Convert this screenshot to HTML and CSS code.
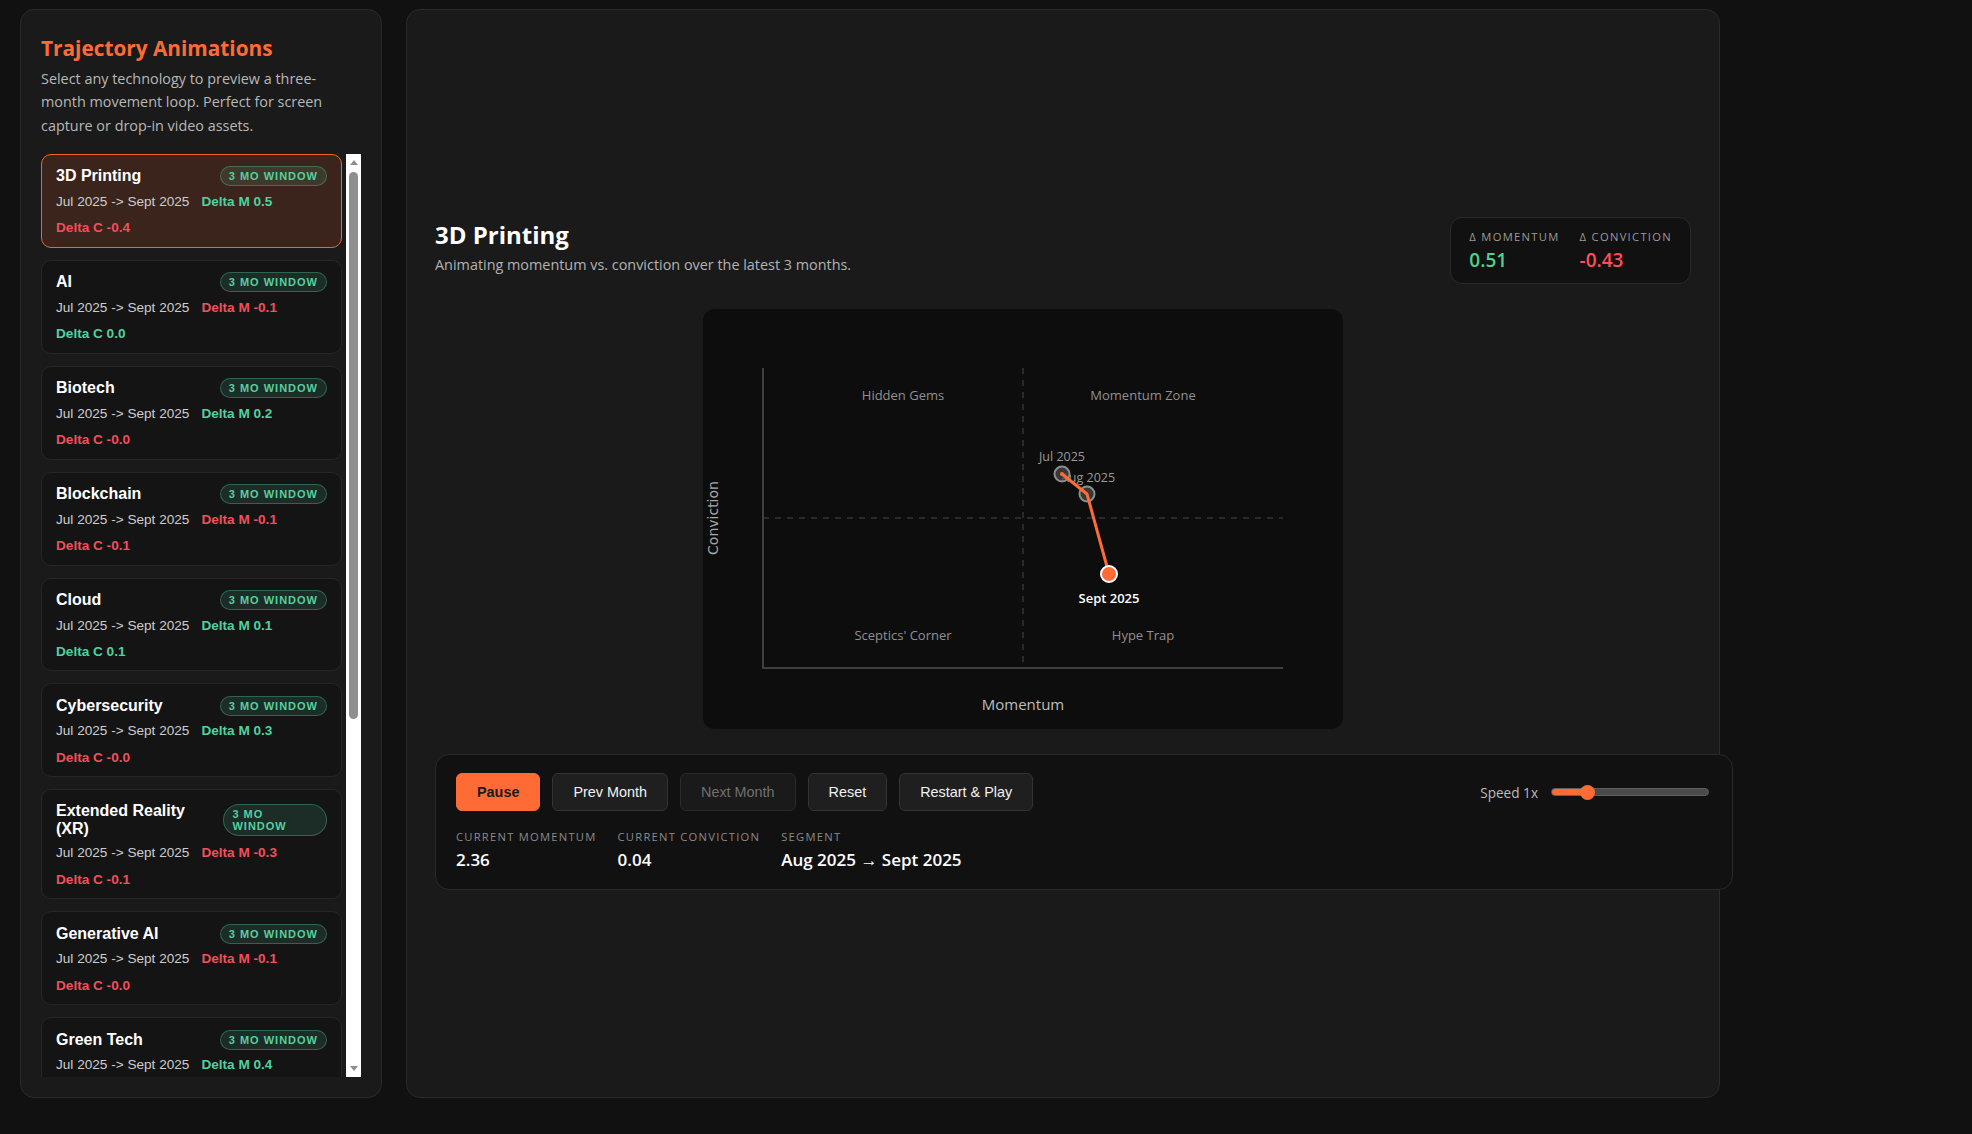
FILE: index.html
```html
<!DOCTYPE html>
<html lang="en">
<head>
<meta charset="utf-8">
<title>Trajectory Animations</title>
<link rel="stylesheet" href="styles.css">
</head>
<body>
<div class="app">
  <aside class="sidebar">
    <h1 class="side-title">Trajectory Animations</h1>
    <p class="side-desc">Select any technology to preview a three-month movement loop. Perfect for screen capture or drop-in video assets.</p>
    <div class="list-wrap">
      <div class="tech-list">
        <button class="tech-card is-active">
          <span class="card-head"><span class="card-name">3D Printing</span><span class="badge">3 MO WINDOW</span></span>
          <span class="card-meta"><span class="range">Jul 2025 -&gt; Sept 2025</span><span class="up">Delta M 0.5</span><span class="down">Delta C -0.4</span></span>
        </button>
        <button class="tech-card">
          <span class="card-head"><span class="card-name">AI</span><span class="badge">3 MO WINDOW</span></span>
          <span class="card-meta"><span class="range">Jul 2025 -&gt; Sept 2025</span><span class="down">Delta M -0.1</span><span class="up">Delta C 0.0</span></span>
        </button>
        <button class="tech-card">
          <span class="card-head"><span class="card-name">Biotech</span><span class="badge">3 MO WINDOW</span></span>
          <span class="card-meta"><span class="range">Jul 2025 -&gt; Sept 2025</span><span class="up">Delta M 0.2</span><span class="down">Delta C -0.0</span></span>
        </button>
        <button class="tech-card">
          <span class="card-head"><span class="card-name">Blockchain</span><span class="badge">3 MO WINDOW</span></span>
          <span class="card-meta"><span class="range">Jul 2025 -&gt; Sept 2025</span><span class="down">Delta M -0.1</span><span class="down">Delta C -0.1</span></span>
        </button>
        <button class="tech-card">
          <span class="card-head"><span class="card-name">Cloud</span><span class="badge">3 MO WINDOW</span></span>
          <span class="card-meta"><span class="range">Jul 2025 -&gt; Sept 2025</span><span class="up">Delta M 0.1</span><span class="up">Delta C 0.1</span></span>
        </button>
        <button class="tech-card">
          <span class="card-head"><span class="card-name">Cybersecurity</span><span class="badge">3 MO WINDOW</span></span>
          <span class="card-meta"><span class="range">Jul 2025 -&gt; Sept 2025</span><span class="up">Delta M 0.3</span><span class="down">Delta C -0.0</span></span>
        </button>
        <button class="tech-card">
          <span class="card-head"><span class="card-name">Extended Reality (XR)</span><span class="badge">3 MO WINDOW</span></span>
          <span class="card-meta"><span class="range">Jul 2025 -&gt; Sept 2025</span><span class="down">Delta M -0.3</span><span class="down">Delta C -0.1</span></span>
        </button>
        <button class="tech-card">
          <span class="card-head"><span class="card-name">Generative AI</span><span class="badge">3 MO WINDOW</span></span>
          <span class="card-meta"><span class="range">Jul 2025 -&gt; Sept 2025</span><span class="down">Delta M -0.1</span><span class="down">Delta C -0.0</span></span>
        </button>
        <button class="tech-card">
          <span class="card-head"><span class="card-name">Green Tech</span><span class="badge">3 MO WINDOW</span></span>
          <span class="card-meta"><span class="range">Jul 2025 -&gt; Sept 2025</span><span class="up">Delta M 0.4</span><span class="up">Delta C 0.2</span></span>
        </button>
        <button class="tech-card">
          <span class="card-head"><span class="card-name">IoT</span><span class="badge">3 MO WINDOW</span></span>
          <span class="card-meta"><span class="range">Jul 2025 -&gt; Sept 2025</span><span class="down">Delta M -0.2</span><span class="up">Delta C 0.0</span></span>
        </button>
        <button class="tech-card">
          <span class="card-head"><span class="card-name">Quantum Computing</span><span class="badge">3 MO WINDOW</span></span>
          <span class="card-meta"><span class="range">Jul 2025 -&gt; Sept 2025</span><span class="up">Delta M 0.6</span><span class="up">Delta C 0.1</span></span>
        </button>
        <button class="tech-card">
          <span class="card-head"><span class="card-name">Robotics</span><span class="badge">3 MO WINDOW</span></span>
          <span class="card-meta"><span class="range">Jul 2025 -&gt; Sept 2025</span><span class="up">Delta M 0.2</span><span class="down">Delta C -0.1</span></span>
        </button>
      </div>
      <div class="scrollbar" aria-hidden="true">
        <span class="sb-arrow sb-up"></span>
        <span class="sb-track"><span class="sb-thumb"></span></span>
        <span class="sb-arrow sb-down"></span>
      </div>
    </div>
  </aside>

  <main class="stage">
    <header class="stage-head">
      <div class="stage-title">
        <h2>3D Printing</h2>
        <p>Animating momentum vs. conviction over the latest 3 months.</p>
      </div>
      <div class="delta-box">
        <div class="delta-item"><span class="delta-label">Δ Momentum</span><span class="delta-value up">0.51</span></div>
        <div class="delta-item"><span class="delta-label">Δ Conviction</span><span class="delta-value down">-0.43</span></div>
      </div>
    </header>

    <div class="chart">
      <svg class="chart-svg" width="640" height="420" viewBox="0 0 640 420">
        <line x1="320" y1="59" x2="320" y2="359" class="mid-line"/>
        <line x1="60" y1="209" x2="580" y2="209" class="mid-line"/>
        <line x1="60" y1="59" x2="60" y2="360" class="axis-line"/>
        <line x1="59" y1="359" x2="580" y2="359" class="axis-line"/>
        <text x="200" y="86" class="quad">Hidden Gems</text>
        <text x="440" y="86" class="quad">Momentum Zone</text>
        <text x="200" y="326" class="quad">Sceptics' Corner</text>
        <text x="440" y="326" class="quad">Hype Trap</text>
        <text x="320" y="395" class="axis-x">Momentum</text>
        <text x="10" y="209" class="axis-y" transform="rotate(-90 10 209)">Conviction</text>
        <text x="359" y="147" class="pt-label">Jul 2025</text>
        <text x="385" y="168" class="pt-label">Aug 2025</text>
        <circle cx="359" cy="165" r="7.5" class="pt-past"/>
        <circle cx="384" cy="185" r="7.5" class="pt-past"/>
        <polyline points="359,165 384,185 406,265" class="trail"/>
        <circle cx="359" cy="165" r="2" class="trail-dot"/>
        <circle cx="406" cy="265" r="8" class="pt-current"/>
        <text x="406" y="289" class="pt-label-current">Sept 2025</text>
      </svg>
    </div>

    <section class="controls">
      <div class="controls-row">
        <div class="btns">
          <button class="btn btn-primary">Pause</button>
          <button class="btn">Prev Month</button>
          <button class="btn" disabled>Next Month</button>
          <button class="btn">Reset</button>
          <button class="btn">Restart &amp; Play</button>
        </div>
        <label class="speed"><span class="speed-label">Speed 1x</span><input class="slider" type="range" min="0.5" max="3" step="0.25" value="1"></label>
      </div>
      <div class="stats">
        <div class="stat"><span class="stat-label">Current Momentum</span><span class="stat-value">2.36</span></div>
        <div class="stat"><span class="stat-label">Current Conviction</span><span class="stat-value">0.04</span></div>
        <div class="stat"><span class="stat-label">Segment</span><span class="stat-value">Aug 2025 → Sept 2025</span></div>
      </div>
    </section>
  </main>
</div>
</body>
</html>
```

FILE: styles.css
```css
* { box-sizing: border-box; }

html, body { margin: 0; }

body {
  background: #111111;
  color: #eaeaea;
  font-family: "Open Sans", "Segoe UI", sans-serif;
}

.app {
  display: grid;
  grid-template-columns: 362px 1314px;
  grid-template-rows: 1089px;
  gap: 24px;
  padding: 9px 20px;
}

/* ---------- Sidebar ---------- */
.sidebar {
  background: #1a1a1a;
  border: 1px solid #2a2a2a;
  border-radius: 14px;
  padding: 20px;
  display: flex;
  flex-direction: column;
  min-height: 0;
}

.side-title {
  margin: 4px 0 0;
  font-size: 20.8px;
  font-weight: 700;
  color: #ff6b35;
  line-height: normal;
}

.side-desc {
  margin: 5px 0 17px;
  font-size: 14.4px;
  line-height: 1.62;
  color: #b8b8b8;
  max-width: 312px;
}

.list-wrap {
  flex: 1;
  min-height: 0;
  display: flex;
  gap: 4px;
}

.tech-list {
  flex: 1;
  min-width: 0;
  overflow: hidden;
  display: flex;
  flex-direction: column;
  gap: 12px;
}

/* static classic scrollbar look */
.scrollbar {
  flex: 0 0 15px;
  background: #ffffff;
  display: flex;
  flex-direction: column;
}

.sb-arrow {
  flex: 0 0 15px;
  display: flex;
  align-items: center;
  justify-content: center;
}

.sb-arrow::before {
  content: "";
  width: 0;
  height: 0;
  border-left: 4.5px solid transparent;
  border-right: 4.5px solid transparent;
}

.sb-up::before { border-bottom: 5px solid #8f8f8f; margin-top: 2px; }
.sb-down::before { border-top: 5px solid #8f8f8f; margin-bottom: 2px; }

.sb-track {
  flex: 1;
  padding: 3px 3px 0;
}

.sb-thumb {
  display: block;
  height: 547px;
  background: #8f8f8f;
  border-radius: 5px;
}

.tech-card {
  flex-shrink: 0;
  display: block;
  width: 100%;
  margin: 0;
  text-align: left;
  background: #141414;
  border: 1px solid #262626;
  border-radius: 10px;
  padding: 11.5px 14px;
  font-family: "Liberation Sans", Arial, sans-serif;
  color: #ffffff;
  cursor: pointer;
}

.tech-card.is-active {
  background: #3a241b;
  border-color: #f0642f;
}

.card-head {
  display: flex;
  justify-content: space-between;
  align-items: center;
  gap: 8px;
}

.card-name {
  font-size: 16px;
  font-weight: 700;
  color: #ffffff;
}

.badge {
  font-size: 11px;
  font-weight: 600;
  letter-spacing: 1px;
  color: #56cf9f;
  padding: 3px 8px;
  border: 1px solid rgba(86, 207, 159, 0.35);
  background: rgba(86, 207, 159, 0.13);
  border-radius: 999px;
}

.card-meta {
  display: flex;
  flex-wrap: wrap;
  gap: 11.4px 12px;
  margin-top: 7.5px;
  font-size: 13.6px;
}

.range { color: #cdcdcd; }

.up { color: #4fd1a0; font-weight: 700; }
.down { color: #f04f5b; font-weight: 700; }

/* ---------- Stage ---------- */
.stage {
  background: #1a1a1a;
  border: 1px solid #2a2a2a;
  border-radius: 14px;
  padding: 28px;
  display: flex;
  flex-direction: column;
  justify-content: center;
  gap: 25px;
  min-width: 0;
}

.stage-head {
  display: flex;
  justify-content: space-between;
  align-items: flex-start;
}

.stage-title h2 {
  margin: 1px 0 0;
  font-size: 24px;
  font-weight: 700;
  color: #ffffff;
  line-height: normal;
}

.stage-title p {
  margin: 3px 0 0;
  font-size: 14.4px;
  line-height: 1.5;
  color: #b3b3b3;
}

.delta-box {
  display: flex;
  gap: 20px;
  padding: 11px 18px 10px;
  background: #111111;
  border: 1px solid #2a2a2a;
  border-radius: 12px;
}

.delta-item {
  display: flex;
  flex-direction: column;
  gap: 3px;
}

.delta-label {
  font-size: 11.2px;
  letter-spacing: 1.3px;
  text-transform: uppercase;
  color: #9a9a9a;
}

.delta-value {
  font-size: 19px;
  font-weight: 600;
}

.delta-value.up { color: #4fd18f; }
.delta-value.down { color: #ff4d5a; }

/* ---------- Chart ---------- */
.chart {
  align-self: flex-start;
  margin-left: 268px;
  width: 640px;
  height: 420px;
  background: #0d0d0d;
  border-radius: 12px;
}

.chart-svg { display: block; }

.mid-line {
  stroke: #343434;
  stroke-width: 1.5;
  stroke-dasharray: 6 6;
}

.axis-line {
  stroke: #3f3f3f;
  stroke-width: 2;
}

.quad {
  font-family: "Open Sans", sans-serif;
  font-size: 13px;
  fill: #909090;
  text-anchor: middle;
  dominant-baseline: central;
}

.axis-x {
  font-family: "Open Sans", sans-serif;
  font-size: 15px;
  fill: #bdbdbd;
  text-anchor: middle;
  dominant-baseline: central;
}

.axis-y {
  font-family: "DejaVu Sans", sans-serif;
  font-size: 14px;
  fill: #a8a8a8;
  text-anchor: middle;
  dominant-baseline: central;
}

.pt-label {
  font-family: "Open Sans", sans-serif;
  font-size: 12.5px;
  fill: #9a9a9a;
  text-anchor: middle;
  dominant-baseline: central;
}

.pt-label-current {
  font-family: "Open Sans", sans-serif;
  font-size: 13px;
  font-weight: 600;
  fill: #ffffff;
  text-anchor: middle;
  dominant-baseline: central;
}

.pt-past {
  fill: rgba(70, 70, 70, 0.75);
  stroke: #8e8e8e;
  stroke-width: 2;
}

.trail {
  fill: none;
  stroke: #ff6b35;
  stroke-width: 3;
  stroke-linejoin: round;
  stroke-linecap: round;
}

.trail-dot { fill: #ff6b35; }

.pt-current {
  fill: #ff6b35;
  stroke: #ffffff;
  stroke-width: 2;
}

/* ---------- Controls ---------- */
.controls {
  box-sizing: content-box;
  width: 100%;
  padding: 18px 20px;
  background: #111111;
  border: 1px solid #2a2a2a;
  border-radius: 14px;
}

.controls-row {
  display: flex;
  justify-content: space-between;
  align-items: center;
}

.btns {
  display: flex;
  gap: 12px;
}

.btn {
  font-family: "Liberation Sans", Arial, sans-serif;
  font-size: 14.4px;
  line-height: normal;
  padding: 10px 20px;
  margin: 0;
  border-radius: 6px;
  border: 1px solid #333333;
  background: #1f1f1f;
  color: #f2f2f2;
  cursor: pointer;
}

.btn-primary {
  background: #ff6b35;
  border-color: #ff6b35;
  color: #1a1a1a;
  font-weight: 600;
}

.btn:disabled {
  background: #1a1a1a;
  border-color: #2a2a2a;
  color: #707070;
  cursor: default;
}

.speed {
  display: flex;
  align-items: center;
  gap: 13px;
  margin-right: 3px;
}

.speed-label {
  font-size: 13.6px;
  color: #bcbcbc;
}

.slider {
  -webkit-appearance: none;
  appearance: none;
  width: 158px;
  height: 8px;
  margin: 0;
  border-radius: 4px;
  border: 1px solid #5e5e5e;
  background: linear-gradient(to right, #ff6b35 0 23%, #4a4a4a 23% 100%);
}

.slider::-webkit-slider-thumb {
  -webkit-appearance: none;
  appearance: none;
  width: 15px;
  height: 15px;
  border-radius: 50%;
  background: #ff6b35;
  border: none;
}

.stats {
  display: flex;
  gap: 21px;
  margin-top: 18px;
}

.stat {
  display: flex;
  flex-direction: column;
  gap: 4px;
}

.stat-label {
  font-size: 11.2px;
  letter-spacing: 1.25px;
  text-transform: uppercase;
  color: #8a8a8a;
}

.stat-value {
  font-size: 17px;
  font-weight: 600;
  color: #ffffff;
}
```
